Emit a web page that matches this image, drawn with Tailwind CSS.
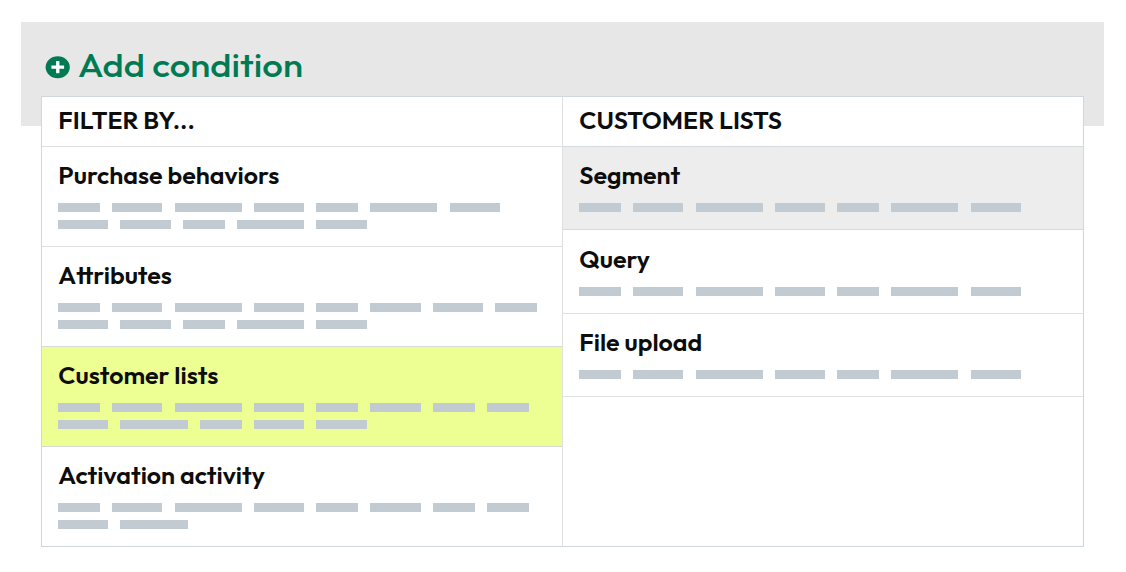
<!DOCTYPE html>
<html lang="en">
<head>
<meta charset="utf-8">
<title>Add condition</title>
<script src="https://cdn.jsdelivr.net/npm/@tailwindcss/browser@4"></script>
</head>
<body class="bg-white w-[1126px] h-[572px] overflow-hidden font-[Outfit,Lato,sans-serif] text-[#0d0d0d]">
<main class="pt-[22px] px-[21px]">
  <div class="h-[104px] w-[1083px] bg-[#e7e7e7] pl-[24px] pt-[22px]">
    <div class="flex items-center h-[44px] text-[#007a53]">
      <svg class="w-[26px] h-[24px] mt-[2px]" viewBox="0 0 26 24"><ellipse cx="12.7" cy="12.2" rx="12.1" ry="11" fill="#007a53"/><path d="M11.1 6.100h3.300v4.500h4.700v3.200h-4.700v4.500h-3.300v-4.500H6.400v-3.200h4.700z" fill="#fff"/></svg>
      <h1 class="ml-[7.300px] -mt-[3px] whitespace-nowrap font-medium text-[33.333px] leading-[44px] origin-left scale-x-[1.095]"><span>Add condition</span></h1>
    </div>
  </div>
  <section class="relative -mt-[30px] ml-[20px] w-[1043px] h-[451px] border border-[#cfd6dc] bg-white flex text-[25px] leading-[30px] font-semibold whitespace-nowrap">
    <div class="w-[521px] border-r border-[#dde1e4]">
      <div class="h-[50px] border-b border-[#dde1e4] pl-[16.300px] pt-[8px]"><span>FILTER BY...</span></div>
      <div class="h-[100px] border-b border-[#dde1e4] pl-[16px] pt-[13px]">
        <h2 class="pl-[0.3px]"><span>Purchase behaviors</span></h2>
        <div data-bars="5686586 66586"></div>
      </div>
      <div class="h-[100px] border-b border-[#d5dcd8] pl-[16px] pt-[13px]">
        <h2 class="pl-[0.3px]"><span>Attributes</span></h2>
        <div data-bars="56865665 66586"></div>
      </div>
      <div class="h-[100px] border-b border-[#d5dcd8] bg-[#edff93] pl-[16px] pt-[13px]">
        <h2 class="pl-[0.3px]"><span>Customer lists</span></h2>
        <div data-bars="56865655 68566"></div>
      </div>
      <div class="h-[99px] pl-[16px] pt-[13px]">
        <h2 class="pl-[0.3px]"><span>Activation activity</span></h2>
        <div data-bars="56865655 68"></div>
      </div>
    </div>
    <div class="w-[520px]">
      <div class="h-[50px] border-b border-[#d5dcdf] pl-[16.300px] pt-[8px]"><span>CUSTOMER LISTS</span></div>
      <div class="h-[83px] border-b border-[#d5dadf] bg-[#ededed] pl-[16px] pt-[13px]">
        <h2 class="pl-[0.3px]"><span>Segment</span></h2>
        <div data-bars="5686586"></div>
      </div>
      <div class="h-[84px] border-b border-[#dde1e4] pl-[16px] pt-[14px]">
        <h2 class="pl-[0.3px]"><span>Query</span></h2>
        <div data-bars="5686586"></div>
      </div>
      <div class="h-[83px] border-b border-[#dde1e4] pl-[16px] pt-[13px]">
        <h2 class="pl-[0.3px]"><span>File upload</span></h2>
        <div data-bars="5686586"></div>
      </div>
    </div>
  </section>
</main>
<script>
const widths = { 5: "w-[42px]", 6: "w-[50.4px]", 8: "w-[67.1px]" };
document.querySelectorAll("[data-bars]").forEach(box => {
  box.className = "flex flex-col gap-[8px] pt-[13px]";
  box.innerHTML = box.dataset.bars.split(" ").map(line =>
    '<div class="flex gap-[12.1px]">' + [...line].map(n => `<i class="h-[9px] shrink-0 bg-[#c2cad2] ${widths[n]}"></i>`).join("") + "</div>").join("");
});
</script>
</body>
</html>
